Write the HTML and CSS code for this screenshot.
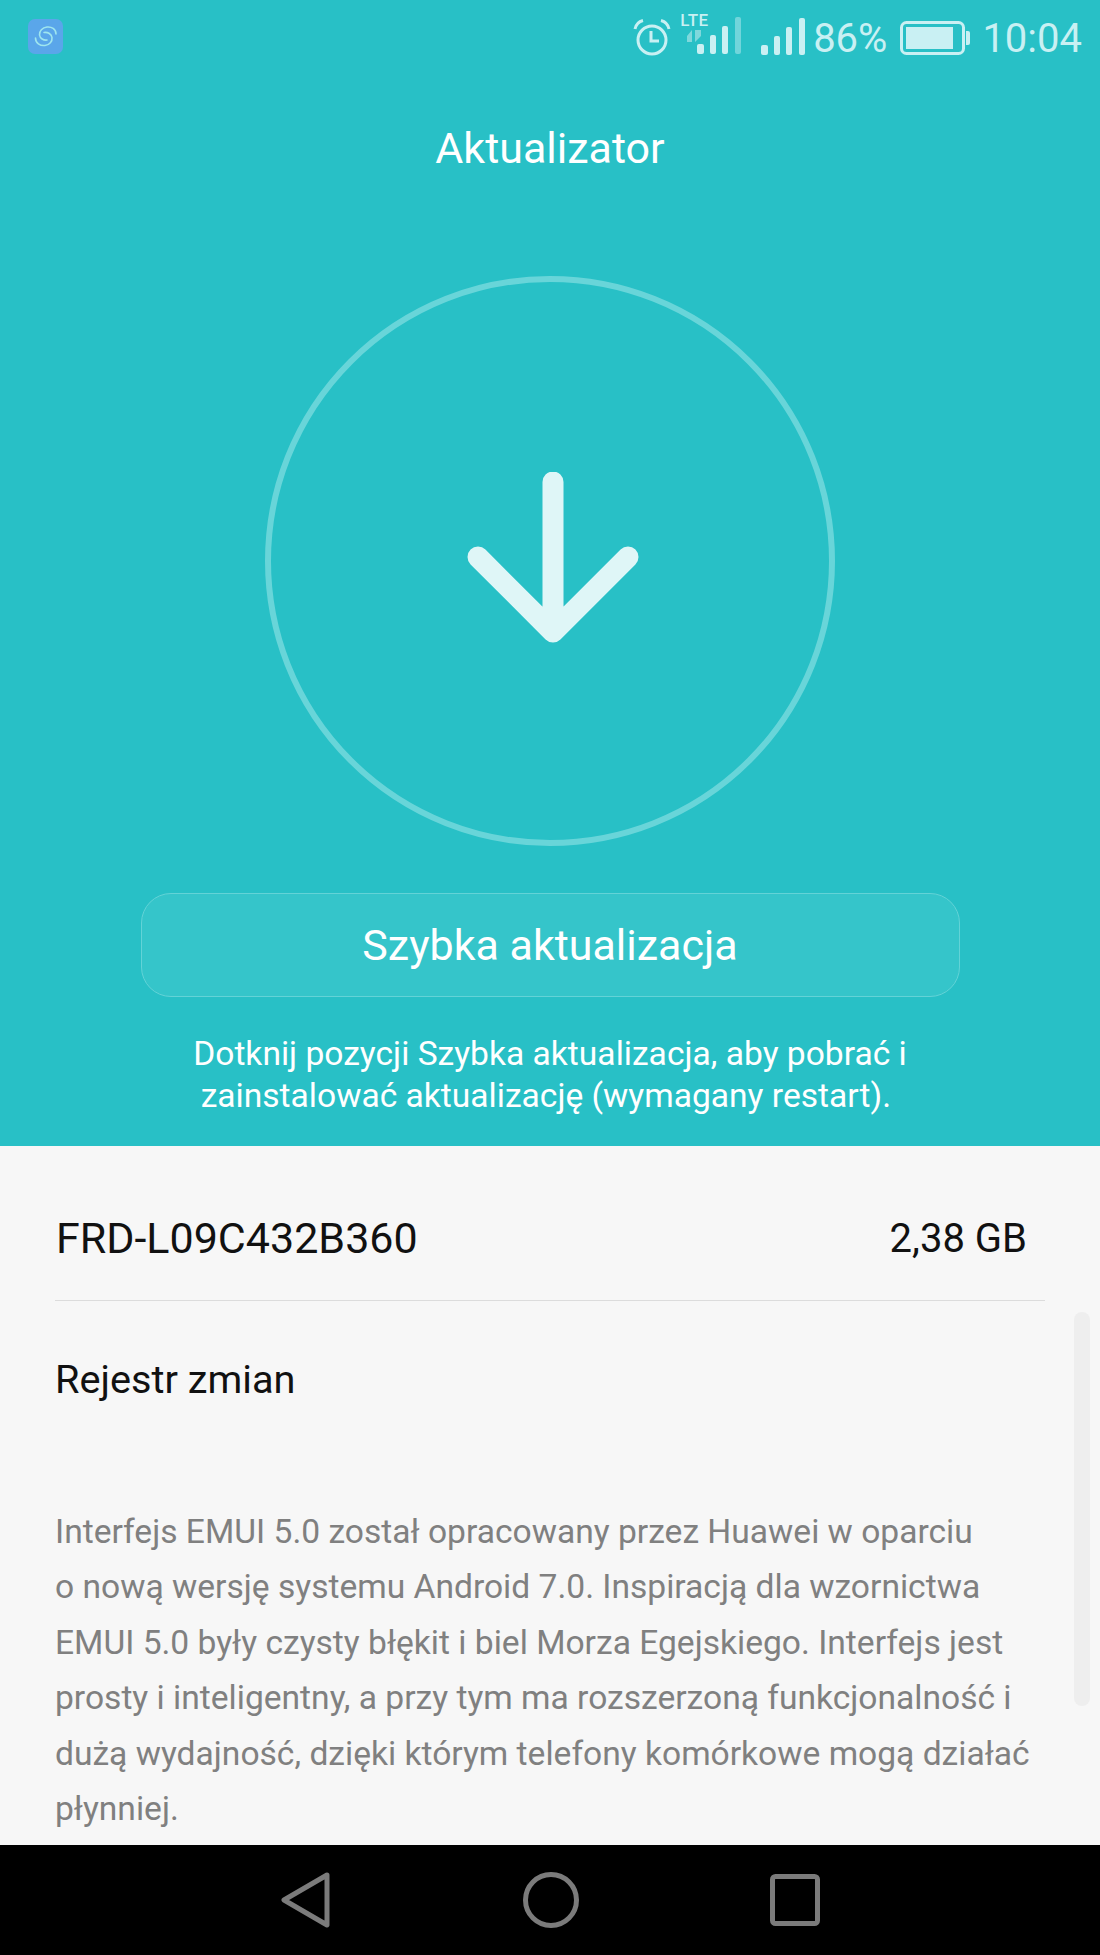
FILE: index.html
```html
<!DOCTYPE html>
<html lang="pl">
<head>
  <meta charset="UTF-8">
  <title>Aktualizator</title>
  <link rel="stylesheet" href="styles.css">
</head>
<body>
  <div class="screen">
    <section class="top">
      <div class="status-bar">
        <svg class="app-icon" width="35" height="35" viewBox="0 0 35 35">
          <rect width="35" height="35" rx="7" fill="#5aa6ea"/>
          <g fill="none" stroke="#9fe6ee" stroke-width="1.6" stroke-linecap="round">
            <path d="M28 15c0-5-4.500-7.500-9-7-4.500.5-8 4-7.500 8 .5 3.500 4 5.500 7.500 5"/>
            <path d="M7.500 19c0 5 4.500 8 9.500 7.500 4.500-.5 7.500-4 7-8-.5-3.500-4-5.500-8-5"/>
          </g>
        </svg>
        <div class="status-right">
          <svg class="alarm" width="38" height="38" viewBox="0 0 38 38">
            <circle cx="19" cy="22" r="14" fill="none" stroke="#c9f0f3" stroke-width="3"/>
            <path d="M18 13v10h8" fill="none" stroke="#c9f0f3" stroke-width="3"/>
            <path d="M2 11C3 6.500 6 3.500 10 2.500M36 11c-1-4.500-4-7.500-8-8.500" fill="none" stroke="#c9f0f3" stroke-width="3"/>
          </svg>
          <div class="sim-signal">
            <span class="lte">LTE</span>
            <svg class="arrows" width="18" height="12" viewBox="0 0 18 12">
              <path d="M2 12V6l5-6v12zM10 0v12l6-6V0z" fill="#7fd8dc"/>
            </svg>
            <svg class="bars" width="44" height="37" viewBox="0 0 44 37">
              <rect x="0" y="27" width="7" height="10" rx="2" fill="#c9f0f3"/>
              <rect x="13" y="18" width="6" height="19" rx="2" fill="#c9f0f3"/>
              <rect x="25" y="9" width="6" height="28" rx="2" fill="#c9f0f3"/>
              <rect x="38" y="0" width="6" height="37" rx="2" fill="#c9f0f3" opacity=".45"/>
            </svg>
          </div>
          <svg class="signal" width="44" height="37" viewBox="0 0 44 37">
            <rect x="0" y="27" width="7" height="10" rx="2" fill="#c9f0f3"/>
            <rect x="13" y="18" width="6" height="19" rx="2" fill="#c9f0f3"/>
            <rect x="25" y="9" width="6" height="28" rx="2" fill="#c9f0f3"/>
            <rect x="38" y="0" width="6" height="37" rx="2" fill="#c9f0f3"/>
          </svg>
          <span class="percent">86%</span>
          <svg class="battery" width="70" height="34" viewBox="0 0 70 34">
            <rect x="1.500" y="1.500" width="62" height="31" rx="5" fill="none" stroke="#c9f0f3" stroke-width="3"/>
            <rect x="6" y="6" width="47" height="22" fill="#c9f0f3"/>
            <path d="M66 10h2a2 2 0 0 1 2 2v10a2 2 0 0 1-2 2h-2z" fill="#c9f0f3"/>
          </svg>
          <span class="clock">10:04</span>
        </div>
      </div>

      <h1 class="title">Aktualizator</h1>

      <div class="ring">
        <svg width="172" height="172" viewBox="0 0 172 172">
          <path d="M86 10v150M11 85l75 75 75-75" fill="none" stroke="#dff6f7" stroke-width="21" stroke-linecap="round" stroke-linejoin="round"/>
        </svg>
      </div>

      <button class="update-btn">Szybka aktualizacja</button>

      <p class="hint">Dotknij pozycji Szybka aktualizacja, aby pobrać i<br>zainstalować aktualizację (wymagany restart).&nbsp;</p>
    </section>

    <section class="details">
      <div class="version-row">
        <span class="version">FRD-L09C432B360</span>
        <span class="size">2,38 GB</span>
      </div>
      <h2 class="changes-title">Rejestr zmian</h2>
      <p class="changes">Interfejs EMUI 5.0 został opracowany przez Huawei w oparciu<br>o nową wersję systemu Android 7.0. Inspiracją dla wzornictwa<br>EMUI 5.0 były czysty błękit i biel Morza Egejskiego. Interfejs jest<br>prosty i inteligentny, a przy tym ma rozszerzoną funkcjonalność i<br>dużą wydajność, dzięki którym telefony komórkowe mogą działać<br>płynniej.</p>
      <div class="scrollbar"></div>
    </section>

    <nav class="nav-bar">
      <svg width="50" height="56" viewBox="0 0 50 56">
        <path d="M46 3 3 28l43 25z" fill="none" stroke="#7b7b7b" stroke-width="5" stroke-linejoin="round"/>
      </svg>
      <svg width="56" height="56" viewBox="0 0 56 56">
        <circle cx="28" cy="28" r="25.500" fill="none" stroke="#7b7b7b" stroke-width="5"/>
      </svg>
      <svg width="50" height="52" viewBox="0 0 50 52">
        <rect x="2.500" y="2.500" width="45" height="47" rx="3" fill="none" stroke="#7b7b7b" stroke-width="5"/>
      </svg>
    </nav>
  </div>
</body>
</html>
```

FILE: styles.css
```css
* {
  box-sizing: border-box;
}
body {
  margin: 0;
  font-family: "Roboto", "Liberation Sans", sans-serif;
  background-color: #000;
}
.screen {
  width: 1100px;
  height: 1955px;
  display: flex;
  flex-direction: column;
  overflow: hidden;
}

/* teal upper part */
.top {
  height: 1146px;
  background-color: #28c0c6;
  color: #fff;
  display: flex;
  flex-direction: column;
  align-items: center;
}
.status-bar {
  width: 100%;
  height: 72px;
  padding: 10px 18px 0 28px;
  display: flex;
  justify-content: space-between;
  align-items: flex-start;
}
.app-icon {
  margin-top: 9px;
}
.status-right {
  display: flex;
  align-items: center;
  height: 55px;
  color: #c9f0f3;
}
.alarm {
  margin-bottom: 1px;
}
.sim-signal {
  position: relative;
  width: 61px;
  height: 43px;
  margin: 0 0 10px 9px;
}
.lte {
  position: absolute;
  left: 0;
  top: 1px;
  font-size: 17px;
  line-height: 16px;
  font-weight: 500;
  letter-spacing: .5px;
}
.arrows {
  position: absolute;
  left: 5px;
  top: 19px;
}
.bars {
  position: absolute;
  left: 17px;
  bottom: 0;
}
.signal {
  margin: 0 0 2px 20px;
}
.percent {
  font-size: 40px;
  margin: 2px 0 0 8px;
}
.battery {
  margin-left: 13px;
}
.clock {
  font-size: 40px;
  margin: 2px 0 0 12px;
}
.title {
  margin: 48px 0 0;
  font-size: 43px;
  line-height: 56px;
  font-weight: 400;
}
.ring {
  width: 570px;
  height: 570px;
  margin-top: 100px;
  border: 6px solid #68d5d9;
  border-radius: 50%;
  display: flex;
  align-items: center;
  justify-content: center;
}
.ring svg {
  margin: 0 0 7px 6px;
}
.update-btn {
  width: 819px;
  height: 104px;
  margin-top: 47px;
  padding: 0;
  font-family: inherit;
  font-size: 43px;
  color: #fff;
  background-color: #35c5ca;
  border: 1.500px solid #63d3d7;
  border-radius: 30px;
}
.hint {
  margin: 36px 0 0;
  font-size: 33.600px;
  line-height: 42px;
  text-align: center;
}

/* white lower part */
.details {
  position: relative;
  flex: 1;
  background-color: #f7f7f7;
  padding: 0 55px;
}
.version-row {
  height: 155px;
  padding: 30px 18px 0 1px;
  display: flex;
  justify-content: space-between;
  align-items: center;
  border-bottom: 1.500px solid #dcdcdc;
  color: #111;
}
.version {
  font-size: 43px;
}
.size {
  font-size: 40px;
}
.changes-title {
  margin: 54px 0 0;
  font-size: 39.700px;
  line-height: 50px;
  font-weight: 400;
  color: #111;
}
.changes {
  margin: 99px 0 0;
  font-size: 33.600px;
  line-height: 55.400px;
  color: #808080;
  white-space: nowrap;
}
.scrollbar {
  position: absolute;
  right: 10px;
  top: 166px;
  width: 16px;
  height: 394px;
  border-radius: 8px;
  background-color: #eeeeee;
}

.nav-bar {
  height: 110px;
  background-color: #000;
  display: flex;
  align-items: center;
  justify-content: space-between;
  padding: 0 280px 0 281px;
}
```
